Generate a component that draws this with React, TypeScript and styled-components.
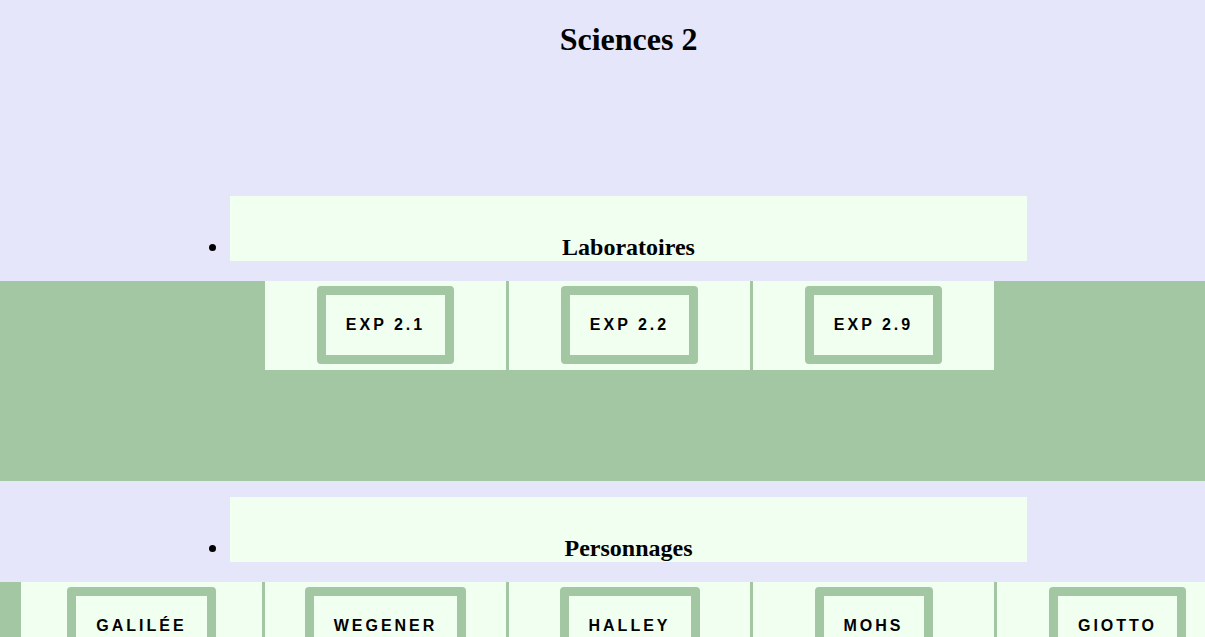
import React from 'react';
import styled, { createGlobalStyle } from 'styled-components';

const GlobalStyle = createGlobalStyle`
  html, body {
    margin: 0;
    padding: 0;
    overflow: hidden;
    background-color: #e6e6fa;
    font-family: "Liberation Serif", "Times New Roman", serif;
    color: #000;
  }
`

const sections = [
  { title: 'Laboratoires', items: ['EXP 2.1', 'EXP 2.2', 'EXP 2.9'] },
  { title: 'Personnages', items: ['GALILÉE', 'WEGENER', 'HALLEY', 'MOHS', 'GIOTTO'] },
];

function App() {
  return (<>
    <GlobalStyle />
    <Page>
      <Title>Sciences 2</Title>
      <Sections>
        {sections.map((s) => (
          <Section key={s.title}>
            <HeadingList>
              <HeadingItem>{s.title}</HeadingItem>
            </HeadingList>
            <Band>
              <Strip>
                {s.items.map((item) => (
                  <Cell key={item}>
                    <TagButton>{item}</TagButton>
                  </Cell>
                ))}
              </Strip>
            </Band>
          </Section>
        ))}
      </Sections>
    </Page>
  </>)
}

export default App;

const Page = styled.div`
  padding-left: 52px;
`

const Title = styled.h1`
  margin: 0;
  padding-top: 21px;
  font-size: 32px;
  font-weight: bold;
  text-align: center;
  line-height: normal;
`

const Sections = styled.div`
  display: flex;
  flex-direction: column;
  gap: 16px;
  margin-top: 138px;
`

const Section = styled.section`
  display: flex;
  flex-direction: column;
`

const HeadingList = styled.ul`
  width: 797px;
  margin: 0 auto;
  padding: 0;
  list-style: disc outside;
`

const HeadingItem = styled.li`
  background-color: #f0fff0;
  padding-top: 38px;
  font-size: 24px;
  font-weight: bold;
  text-align: center;
  line-height: normal;
`

const Band = styled.div`
  display: flex;
  justify-content: center;
  align-items: flex-start;
  height: 200px;
  margin: 20px -54px 0 -52px;
  background-color: #a3c6a3;
`

const Strip = styled.div`
  display: grid;
  grid-auto-flow: column;
  grid-auto-columns: 241px;
  gap: 3px;
  flex-shrink: 0;
`

const Cell = styled.div`
  display: flex;
  justify-content: center;
  padding: 5px 0 6px;
  background-color: #f0fff0;
`

const TagButton = styled.div`
  padding: 21px 20px;
  border: 9px solid #a3c6a3;
  border-radius: 4px;
  background-color: #f0fff0;
  font-family: "Liberation Sans", Arial, sans-serif;
  font-size: 16px;
  font-weight: bold;
  letter-spacing: 3px;
  line-height: 18px;
  white-space: nowrap;
  cursor: pointer;
`
